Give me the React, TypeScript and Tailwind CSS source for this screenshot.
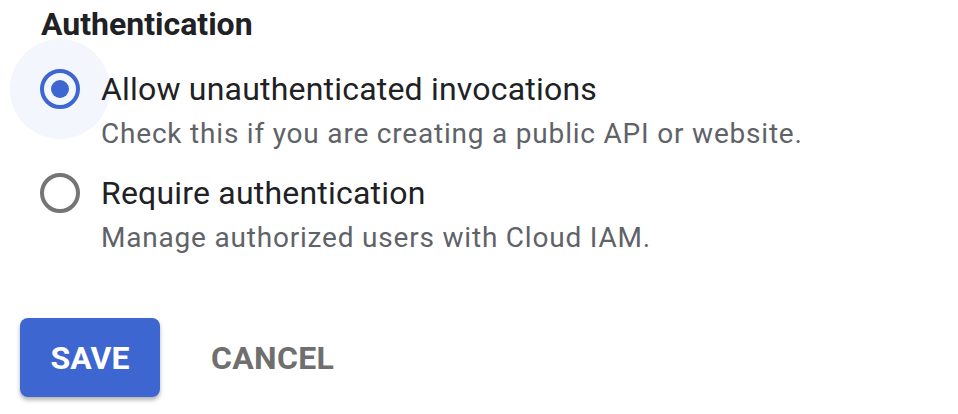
export default function App() {
  return (
    <div className="w-[958px] h-[414px] bg-white pl-5 pt-1 overflow-hidden font-['Roboto',sans-serif]">
      {/* Title */}
      <h2 className="ml-[21px] text-[32px] leading-[40px] font-bold text-[#202124]">
        Authentication
      </h2>

      {/* Radio group */}
      <div className="mt-[25px] flex flex-col gap-[21px]">
        <label className="flex">
          <div className="relative w-20 h-10 flex items-center justify-center shrink-0">
            <div className="absolute w-[100px] h-[100px] rounded-full bg-[#f4f6fd] left-[-10px] top-[-30px]" />
            <div className="relative w-10 h-10 rounded-full border-4 border-[#3e66d0] flex items-center justify-center">
              <div className="w-[18px] h-[18px] rounded-full bg-[#3e66d0]" />
            </div>
          </div>
          <div className="relative ml-[1px] flex flex-col gap-[7px]">
            <span className="text-[32px] leading-[40px] tracking-[0.2px] text-[#202124]">
              Allow unauthenticated invocations
            </span>
            <span className="text-[28px] leading-[36px] tracking-[0.8px] text-[#5f6368]">
              Check this if you are creating a public API or website.
            </span>
          </div>
        </label>

        <label className="flex">
          <div className="w-20 h-10 flex items-center justify-center shrink-0">
            <div className="w-10 h-10 rounded-full border-4 border-[#757575]" />
          </div>
          <div className="ml-[1px] flex flex-col gap-[7px]">
            <span className="text-[32px] leading-[40px] tracking-[0.2px] text-[#202124]">
              Require authentication
            </span>
            <span className="text-[28px] leading-[36px] tracking-[0.8px] text-[#5f6368]">
              Manage authorized users with Cloud IAM.
            </span>
          </div>
        </label>
      </div>

      {/* Actions */}
      <div className="mt-[62px] flex items-center gap-[51px]">
        <button className="w-[140px] h-[79px] rounded-lg bg-[#3e66d0] text-white text-[32px] font-bold shadow-[0_3px_4px_rgba(0,0,0,0.3)]">
          SAVE
        </button>
        <button className="text-[32px] font-bold text-[#6f6f6f] tracking-[0.3px]">
          CANCEL
        </button>
      </div>
    </div>
  );
}
